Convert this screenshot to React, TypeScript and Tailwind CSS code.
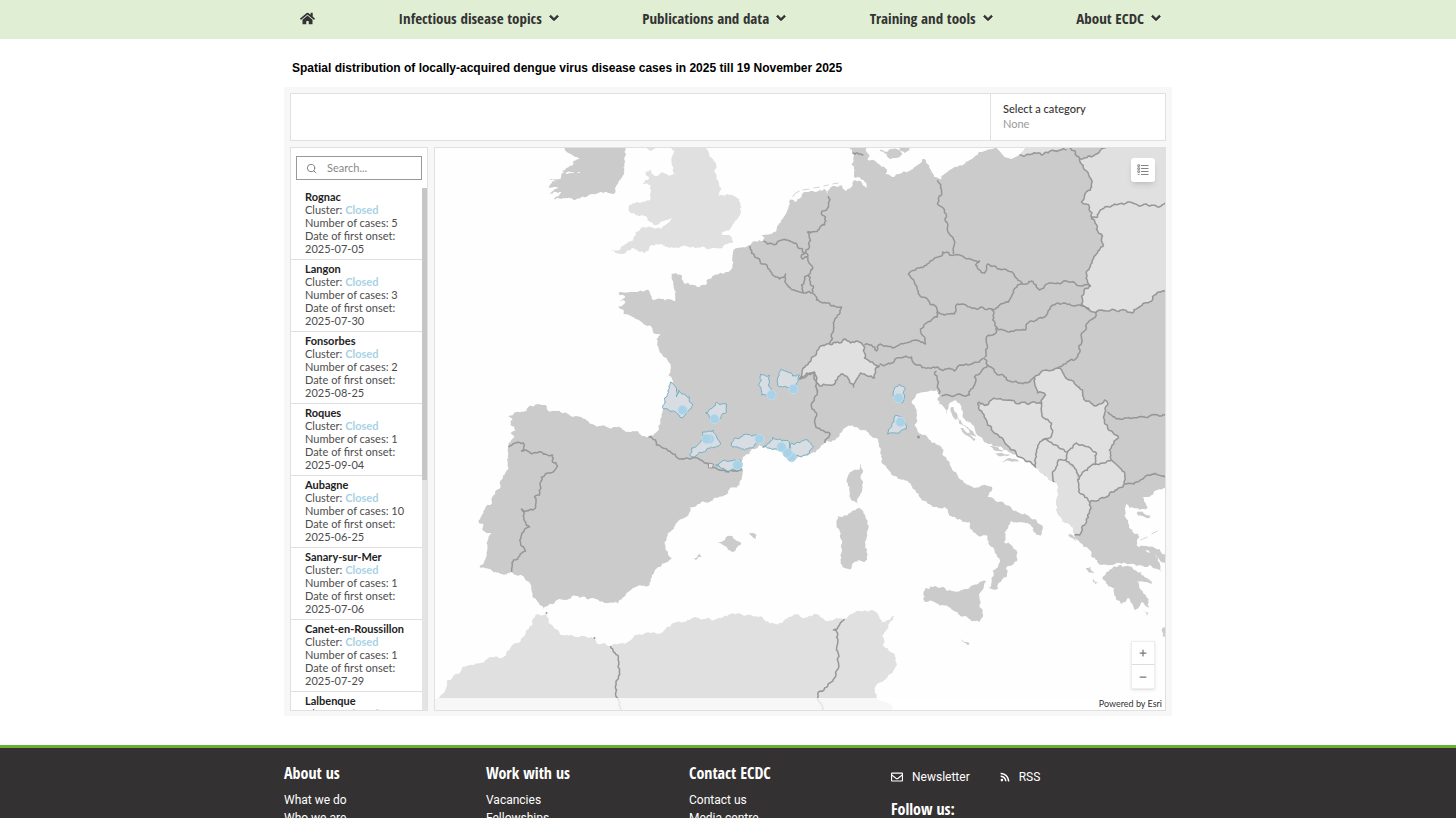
import { FaChevronDown, FaHome, FaRegEnvelope, FaRss } from 'react-icons/fa'
import { Minus, Plus, Search } from 'lucide-react'

const navItems = ['Infectious disease topics', 'Publications and data', 'Training and tools', 'About ECDC']

const clusters = [
  { name: 'Rognac', cases: 5, onset: '2025-07-05' },
  { name: 'Langon', cases: 3, onset: '2025-07-30' },
  { name: 'Fonsorbes', cases: 2, onset: '2025-08-25' },
  { name: 'Roques', cases: 1, onset: '2025-09-04' },
  { name: 'Aubagne', cases: 10, onset: '2025-06-25' },
  { name: 'Sanary-sur-Mer', cases: 1, onset: '2025-07-06' },
  { name: 'Canet-en-Roussillon', cases: 1, onset: '2025-07-29' },
  { name: 'Lalbenque', cases: 1, onset: '2025-08-18' },
]

const footerColumns = [
  { title: 'About us', links: ['What we do', 'Who we are'] },
  { title: 'Work with us', links: ['Vacancies', 'Fellowships'] },
  { title: 'Contact ECDC', links: ['Contact us', 'Media centre'] },
]

// EU/EEA land, mainland first and then the islands
const euLand = [
  '619,294 634,292 649,290 651,295 655,300 662,299 669,299 676,301 675,290 672,274 682,275 684,282 694,285 700,287 706,285 707,280 715,275 728,272 733,267 734,250 738,248 751,245 763,241 768,235 777,229 783,219 788,210 791,199 795,202 802,197 805,192 813,191 825,189 828,194 830,189 833,186 842,185 846,191 848,189 852,187 855,180 861,181 868,188 864,180 856,178 855,170 852,164 854,157 850,148 850,136 867,136 867,148 870,155 868,160 877,162 882,167 887,169 886,174 893,177 898,174 910,171 920,164 923,159 928,164 932,172 935,177 942,179 945,174 957,167 970,160 980,152 997,147 1000,136 1180,136 1180,488 1166,488 1158,490 1153,495 1143,497 1148,508 1140,510 1130,508 1127,504 1125,515 1133,530 1140,537 1137,546 1146,551 1157,557 1163,573 1160,570 1150,565 1137,566 1120,563 1102,565 1092,557 1090,550 1080,542 1075,535 1073,527 1063,522 1058,513 1058,507 1059,487 1055,482 1048,477 1037,468 1020,457 1003,448 987,443 975,428 963,415 962,407 957,401 952,402 949,408 947,414 938,400 940,393 937,390 930,391 920,393 912,402 917,413 915,425 923,435 933,443 942,447 952,468 963,480 973,487 988,486 993,488 988,497 1005,504 1028,515 1042,525 1041,536 1037,535 1034,528 1028,523 1012,521 1005,532 1005,543 1017,550 1018,560 1007,567 1007,577 1002,580 998,589 989,588 993,577 993,570 998,568 1000,563 993,547 987,535 982,536 973,530 970,522 963,522 953,517 945,507 933,507 920,497 905,480 895,476 885,465 882,455 877,438 870,435 857,427 847,427 837,438 825,443 812,453 803,457 793,460 787,452 777,450 767,447 760,445 743,457 742,468 740,485 718,498 690,507 690,512 677,523 665,542 666,550 673,559 661,567 651,579 649,586 636,587 627,593 619,603 607,603 596,599 582,597 572,597 566,600 556,601 549,605 544,609 534,598 532,590 530,582 522,575 512,572 501,574 491,569 480,567 487,553 489,537 492,533 483,530 484,524 479,523 484,513 486,507 491,505 497,490 509,468 509,447 511,442 516,437 511,433 516,430 511,425 513,420 509,416 516,412 527,411 529,407 539,404 546,405 549,411 576,416 601,426 616,427 627,432 634,431 644,436 650,436 656,433 661,423 664,407 671,382 677,386 669,375 671,372 671,364 664,357 659,347 657,339 661,334 656,334 652,327 642,322 634,317 624,314 624,310 619,306 626,302 620,300 626,297',
  '565,136 565,148 571,154 581,159 574,161 574,164 567,168 563,171 571,172 581,173 567,174 562,174 561,179 550,179 557,181 549,187 559,188 550,194 562,192 554,199 562,199 574,200 582,197 594,194 601,192 607,192 614,194 616,190 621,180 624,175 625,160 626,148 626,136',
  '1103,579 1110,570 1120,565 1133,568 1142,572 1150,580 1153,584 1137,581 1147,597 1149,608 1142,602 1135,610 1128,598 1122,604 1117,600 1115,588',
  '1133,545 1147,546 1160,549 1167,556 1167,565 1157,556 1143,551',
  '1137,513 1144,513 1151,516 1150,518 1142,516',
  '924,593 926,588 930,589 931,586 942,587 952,591 970,588 987,581 980,597 983,612 980,622 970,619 958,612 943,605 933,601 924,600',
  '838,516 843,517 860,508 864,513 869,528 867,538 865,562 860,560 855,562 852,568 843,567 841,560 842,540 837,523',
  '861,463 863,473 863,487 858,504 850,497 847,482 850,473 860,470',
  '718,543 726,538 733,536 736,540 741,542 738,547 733,552 725,546',
  '749,534 757,535 758,541 754,538',
  '694,558 700,554 702,557 696,560',
  '880,150 886,152 892,149 900,150 903,154 897,158 889,158 887,154',
  '905,136 910,150 905,153 900,148',
  '1086,568 1091,567 1095,573 1089,572',
  '1093,579 1099,582 1096,584',
  '1068,533 1073,535 1077,541 1072,538',
  '1145,611 1149,613 1147,617',
  '1163,628 1170,627 1170,637 1163,636',
  '962,639 970,643 969,645 964,642',
  '903,466 912,466 911,468 905,469',
  '762,235 771,234 776,237 772,240 765,238',
  // Dalmatian islands
  '951,408 954,407 958,415 956,420 953,416',
  '957,417 961,420 964,426 960,424',
  '961,428 968,433 976,439 974,441 966,435',
  '964,425 971,430 977,437 970,433',
  '990,447 997,447 1004,450 996,451',
  '994,453 1002,453 1011,455 1003,456',
  '1001,460 1010,458 1020,461 1010,461',
]

// countries outside the surveillance area
const otherLand = [
  // Great Britain
  '671,136 671,148 675,152 672,164 676,175 667,174 654,175 651,170 646,172 650,178 643,184 651,185 651,199 640,203 629,206 631,213 642,215 651,222 657,225 667,220 674,216 662,229 644,227 636,232 634,239 621,249 612,250 621,254 634,248 645,253 652,245 662,244 667,247 687,246 700,248 723,248 733,243 732,237 722,234 732,227 738,219 742,207 740,199 730,195 718,196 722,189 717,175 717,164 708,150 702,136',
  '647,148 652,151 657,144 652,143',
  // Maghreb
  '436,699 447,687 448,680 467,666 504,657 517,643 536,615 547,614 549,623 561,635 577,637 594,638 597,643 611,646 627,643 634,637 651,633 661,633 674,623 693,618 717,619 725,616 747,615 763,617 775,624 785,620 797,614 805,618 815,614 827,621 837,618 845,619 860,611 872,610 878,613 882,623 895,616 883,635 885,647 895,654 897,663 888,677 875,688 877,697 890,704 897,720 430,720 430,702',
  // Belarus and Ukraine
  '1080,159 1084,168 1090,177 1091,190 1085,196 1082,202 1090,207 1092,219 1097,229 1103,236 1104,245 1100,250 1087,274 1088,282 1091,286 1085,289 1082,304 1090,310 1098,311 1110,311 1122,310 1133,313 1138,308 1150,302 1155,295 1161,292 1172,289 1180,288 1180,136 1108,136 1108,144 1102,149 1097,154 1092,157',
  // Kaliningrad
  '1020,155 1043,155 1067,150 1066,136 1026,136 1026,150',
  // Switzerland
  '830,344 820,347 817,353 810,362 803,370 803,378 810,373 815,372 817,380 820,386 828,385 835,384 843,374 848,377 854,387 858,378 861,373 868,376 875,378 876,371 880,366 873,362 865,358 865,347 862,343 848,341 840,343',
  // Bosnia and Herzegovina
  '979,402 988,405 992,400 1010,400 1033,402 1042,404 1043,417 1052,423 1052,435 1043,440 1037,450 1036,467 1020,457 1000,437 988,425 980,410',
  // Serbia and Kosovo
  '1035,377 1047,370 1058,368 1070,380 1083,390 1085,400 1098,405 1105,400 1108,405 1105,413 1108,427 1119,437 1112,447 1112,460 1090,467 1080,477 1077,470 1066,460 1068,452 1048,440 1052,435 1052,423 1043,417 1042,404 1046,395 1038,393',
  // Montenegro
  '1036,467 1037,450 1043,440 1048,440 1068,452 1066,462 1059,460 1053,472 1055,482 1048,477',
  // North Macedonia
  '1080,477 1090,467 1112,460 1125,472 1125,484 1107,497 1090,502 1080,493 1078,480',
  // Albania
  '1055,482 1053,472 1059,460 1067,460 1077,470 1078,480 1080,493 1090,502 1087,522 1080,535 1075,535 1073,527 1063,522 1058,513 1058,507 1059,487',
]

const borders = [
  '509,447 516,443 524,443 522,451 534,453 542,452 553,455 553,462 558,466 551,473 542,477 540,495 535,497 536,505 533,510 522,509 526,522 530,527 522,535 521,542 526,551 514,560 512,572',
  '649,437 656,440 657,445 668,450 677,457 693,458 707,463 720,470 729,472 742,470',
  '751,246 752,253 760,259 762,264 768,267 777,277 780,279 786,274 787,284 797,291 807,293 813,293 817,300 830,303 842,307 835,320 830,344',
  '764,241 768,244 777,244 782,240 793,242 803,249 805,254',
  '829,196 827,210 822,212 826,217 825,225 820,229 808,232 811,240 809,249 806,252 802,255 803,259 808,257 813,269 809,275 805,277 802,285 803,293',
  '806,252 808,257',
  '809,275 810,280 814,286 813,293',
  '830,344 820,347 817,353 810,362 803,370 803,378 810,373 815,372 817,380 820,386 828,385 835,384 843,374 848,377 854,387 858,378 861,373 868,376 875,378 876,371 880,366 873,362 865,358 865,347 862,343 848,341 846,339 840,343 830,344',
  '803,378 800,379 807,373 815,373 817,388 818,393 812,407 817,413 815,422 818,428 830,433 828,438 825,443',
  '865,345 872,345 877,351 881,344 893,348 910,342 920,341 926,344 925,337 921,329 932,320 938,317 938,311 930,302 920,295 915,282 909,274 920,268 930,262 942,256 943,252 950,255 955,255',
  '938,180 942,195 938,204 945,210 948,227 955,244 954,254',
  '955,255 960,255 973,260 980,261 976,265 985,273 988,264 1000,269 1015,275 1023,284 1032,281 1040,290 1047,284 1058,283 1067,281 1085,285 1091,286',
  '1023,284 1018,285 1010,300 1001,304 992,309',
  '938,312 945,315 955,314 958,304 975,308 992,309 993,320 997,327 995,334 987,337 988,347 985,357',
  '997,327 1010,332 1026,330 1027,324 1047,315 1055,305 1070,304 1082,306 1090,310',
  '1098,311 1087,324 1082,337 1075,360 1058,368',
  '1035,377 1030,382 1012,382 1000,375 988,365 984,358',
  '880,364 892,363 897,358 912,357 917,365 940,369 955,371 962,365 980,362 984,358',
  '937,371 935,374 938,385 939,394',
  '988,365 975,377 975,385 970,395 960,394 942,396',
  '979,402 988,405 992,400 1010,400 1033,402 1042,404 1043,417 1052,423 1052,435 1043,440 1037,450 1036,467 1020,457 1000,437 988,425 980,410 979,402',
  '1042,404 1046,395 1038,393 1035,377 1047,370 1058,368 1070,380 1083,390 1085,400 1098,405 1105,400 1108,405 1105,413 1108,427 1119,437 1112,447 1112,460',
  '1043,440 1048,440 1068,452 1077,443 1085,446 1097,453 1095,465',
  '1068,452 1066,460 1077,470 1080,477',
  '1080,477 1090,467 1112,460 1125,472 1125,484 1107,497 1090,502 1080,493 1078,480 1080,477',
  '1055,482 1053,472 1059,460 1067,460',
  '1090,502 1087,522 1080,535 1075,535',
  '1108,412 1117,419 1133,418 1150,416 1172,415',
  '1125,484 1137,482 1153,474 1172,477',
  '1066,146 1076,152 1080,159 1084,168 1090,177 1091,190 1085,196 1082,202 1090,207 1092,219 1097,229 1103,236 1104,245 1100,250 1087,274 1088,282 1091,286 1085,289 1082,304 1090,310 1098,311 1110,311 1122,310 1133,313 1138,308 1150,302 1155,295 1161,292 1172,289',
  '1092,218 1098,217 1103,209 1115,204 1127,203 1147,204 1150,206 1158,207 1172,201',
  '1020,155 1043,155 1067,150',
  '1080,159 1092,157 1097,154 1102,149 1108,144',
  '853,153 858,153 864,155',
  '611,646 619,657 619,677 617,690 618,698 622,712',
  '845,619 840,625 834,630 838,633 837,650 839,663 835,678 825,688 819,692 818,698 823,712',
]

const affectedAreas = [
  '671,382 677,390 677,397 679,390 684,394 690,397 690,402 693,404 687,412 683,418 676,412 664,409 665,398',
  '717,402 722,404 727,404 727,412 720,419 711,420 706,413 713,408',
  '761,374 766,376 770,375 769,385 772,393 772,400 768,397 762,395 759,385 762,380',
  '782,369 788,372 793,376 800,375 797,383 792,387 783,387 778,385 778,378',
  '703,432 714,430 718,439 721,443 712,447 700,452 694,457 690,455 692,448 700,443 704,438',
  '732,443 735,438 747,434 758,435 763,440 755,445 745,450 733,447',
  '763,447 770,443 773,437 780,439 790,443 792,450 787,452 768,448',
  '792,443 805,440 810,442 814,447 810,453 802,457 795,457 791,452',
  '716,465 725,460 740,460 742,470 728,471',
  '900,384 906,388 905,395 902,403 897,398 894,392',
  '895,416 902,417 906,423 907,429 895,433 888,434 892,427',
]

const markers = [
  [683, 410], [715, 419], [772, 395], [794, 389], [710, 439], [707, 439], [760, 439],
  [792, 457], [788, 453], [782, 447], [738, 465], [899, 398], [901, 422],
]

type Point = [number, number]

// Splits a segment at a shifted midpoint. The shift depends only on the two
// ends, so neighbours that share a border get the same line.
function splitSegment(a: Point, b: Point): Point[] {
  const length = Math.hypot(b[0] - a[0], b[1] - a[1])
  if (length < 2.6) return [a]
  const forward = a[0] < b[0] || (a[0] === b[0] && a[1] < b[1])
  const [p, q] = forward ? [a, b] : [b, a]
  const seed = Math.sin(p[0] * 12.9898 + p[1] * 78.233 + q[0] * 37.719 + q[1] * 4.581) * 43758.5453
  const shift = (seed - Math.floor(seed) - 0.5) * Math.min(length * 0.5, 3.2)
  const mid: Point = [
    (p[0] + q[0]) / 2 - ((q[1] - p[1]) / length) * shift,
    (p[1] + q[1]) / 2 + ((q[0] - p[0]) / length) * shift,
  ]
  return [...splitSegment(a, mid), ...splitSegment(mid, b)]
}

function toPath(points: string, closed: boolean) {
  const list = points.split(' ').map((pair) => pair.split(',').map(Number) as Point)
  if (closed) list.push(list[0])
  const line = list.slice(1).flatMap((point, i) => splitSegment(list[i], point))
  line.push(list[list.length - 1])
  return `M${line.map(([x, y]) => `${x.toFixed(1)} ${y.toFixed(1)}`).join('L')}${closed ? 'Z' : ''}`
}

function NavBar() {
  return (
    <header className="bg-[#e0eed3]">
      <nav className="mx-auto flex h-[39px] max-w-[888px] items-center justify-between pb-[3px] pl-4 pr-[11px] text-[#333]">
        <a href="#home" aria-label="Home">
          <FaHome className="size-[15px]" />
        </a>
        {navItems.map((item) => (
          <button
            key={item}
            className="flex items-center gap-[7px] font-['Open_Sans_Condensed','Noto_Sans_Condensed','Liberation_Sans_Narrow','Noto_Sans',sans-serif] text-[15px] font-bold leading-[19px]"
          >
            {item}
            <FaChevronDown className="size-[10px]" stroke="currentColor" strokeWidth={50} />
          </button>
        ))}
      </nav>
    </header>
  )
}

function ClusterList() {
  return (
    <aside className="flex w-[138px] shrink-0 flex-col border border-[#e0e0e0] bg-white">
      <label className="mx-[5px] mb-2 mt-2 flex h-6 items-center gap-[10px] border border-[#999] px-[9px]">
        <Search className="size-[11px] shrink-0 text-[#777]" strokeWidth={2} />
        <input
          type="text"
          aria-label="Search clusters"
          placeholder="Search..."
          className="w-full min-w-0 text-[11px] outline-none placeholder:text-[#888]"
        />
      </label>
      <div className="flex min-h-0 flex-1">
        <ul className="min-w-0 flex-1 overflow-hidden text-[11px] leading-[13px] text-[#4c4c4c]">
          {clusters.map((cluster) => (
            <li key={cluster.name} className="h-[72px] whitespace-nowrap border-b border-[#dfdfdf] pl-[14px] pt-[2px]">
              <p className="font-bold text-[#222]">{cluster.name}</p>
              <p>
                Cluster: <span className="font-bold text-[#a9d2e6]">Closed</span>
              </p>
              <p>Number of cases: {cluster.cases}</p>
              <p>Date of first onset:</p>
              <p>{cluster.onset}</p>
            </li>
          ))}
        </ul>
        <div className="w-[5px] bg-[#e4e4e4]">
          <div className="h-[56%] bg-[#c6c6c6]" />
        </div>
      </div>
    </aside>
  )
}

function ClusterMap() {
  return (
    <section className="relative min-w-0 flex-1 overflow-hidden border border-[#e0e0e0] bg-[#fefefe]">
      <svg
        viewBox="435 148 731 562"
        preserveAspectRatio="xMidYMid slice"
        className="block size-full"
        role="img"
        aria-label="Map of dengue clusters in Europe"
      >
        <g fill="#cbcbcb">
          {euLand.map((points) => (
            <path key={points} d={toPath(points, true)} />
          ))}
        </g>
        <g fill="#e0e0e0">
          {otherLand.map((points) => (
            <path key={points} d={toPath(points, true)} />
          ))}
        </g>
        {/* Gulf of Gdansk */}
        <path d="M997 136V148L1000 151 1005 157 1012 159 1020 155 1026 148V136Z" fill="#fefefe" />
        <g fill="none" stroke="#969696" strokeWidth={1.5} strokeLinejoin="round">
          {borders.map((points) => (
            <path key={points} d={toPath(points, false)} />
          ))}
        </g>
        {/* Andorra */}
        <path d="M709 463L714 464 713 468 709 468Z" fill="#e0e0e0" stroke="#969696" />
        {/* Frisian and Sporades islands */}
        <g fill="none" stroke="#d4d4d4" strokeWidth={1}>
          <path d="M793 197L796 193 800 191M803 190L810 189M814 188L820 187M824 186L829 185M833 184L839 183" />
          <path d="M1141 540L1148 537M1152 534L1158 531" />
        </g>
        <g fill="#d8dde3" stroke="#74afc2" strokeWidth={1} strokeLinejoin="round">
          {affectedAreas.map((points) => (
            <path key={points} d={toPath(points, true)} />
          ))}
        </g>
        <g fill="#999">
          <circle cx={919} cy={437} r={1.6} />
          <circle cx={547} cy={613} r={1} />
          <circle cx={595} cy={638} r={1} />
        </g>
        <g fill="#a9d2e7" stroke="#bfdded" strokeWidth={1}>
          {markers.map(([x, y]) => (
            <circle key={`${x}-${y}`} cx={x} cy={y} r={4.7} />
          ))}
        </g>
      </svg>
      <button
        aria-label="Legend"
        className="absolute right-[10px] top-[10px] flex size-6 items-center justify-center rounded-[3px] bg-white shadow-md"
      >
        <svg viewBox="0 0 12 12" className="size-3" fill="none" stroke="#666">
          <path d="M4 1.5H11.5M4 4.5H11.5M4 7.5H11.5M4 10.5H11.5" strokeWidth="0.8" />
          <path d="M0.8 0.8H2.6V2.4H0.8ZM0.8 3.8H2.6V5.4H0.8ZM0.8 6.8H2.6V8.4H0.8ZM0.8 10.5H2.6" strokeWidth="0.7" />
        </svg>
      </button>
      <div className="absolute bottom-[21px] right-[10px] flex flex-col bg-white text-[#777] shadow-sm">
        <button
          aria-label="Zoom in"
          className="flex size-6 items-center justify-center border border-[#eee] border-b-[#ddd]"
        >
          <Plus className="size-[10px]" strokeWidth={3} />
        </button>
        <button aria-label="Zoom out" className="flex size-6 items-center justify-center border border-t-0 border-[#eee]">
          <Minus className="size-[10px]" strokeWidth={3} />
        </button>
      </div>
      <p className="absolute inset-x-0 bottom-0 h-3 bg-white/75 pr-[3px] text-right text-[9px] leading-[11px] text-[#333]">
        Powered by Esri
      </p>
    </section>
  )
}

function Dashboard() {
  return (
    <div className="flex flex-col gap-[6px] bg-[#f7f7f7] px-[6px] pb-[5px] pt-[6px] font-[Lato,sans-serif]">
      <div className="flex h-12 border border-[#e0e0e0] bg-white">
        <div className="flex-1" />
        <div className="flex w-[175px] flex-col justify-center border-l border-[#e0e0e0] pb-[2px] pl-3 text-[11px] leading-[15px]">
          <label htmlFor="category" className="font-medium text-[#333]">
            Select a category
          </label>
          <select id="category" className="w-full appearance-none text-[#999]">
            <option>None</option>
          </select>
        </div>
      </div>
      <div className="flex h-[564px] gap-[6px]">
        <ClusterList />
        <ClusterMap />
      </div>
    </div>
  )
}

function Footer() {
  return (
    <footer className="flex-1 border-t-[3px] border-[#69b12f] bg-[#333131] font-[Roboto,sans-serif] text-[12px] text-white">
      <div className="mx-auto grid max-w-[888px] grid-cols-[202px_203px_202px_1fr] pt-[15px]">
        {footerColumns.map((column) => (
          <div key={column.title}>
            <h2 className="font-['Open_Sans_Condensed','Noto_Sans_Condensed','Liberation_Sans_Narrow','Noto_Sans',sans-serif] text-[16px] font-bold leading-5">
              {column.title}
            </h2>
            <ul className="mt-2 leading-[18px]">
              {column.links.map((link) => (
                <li key={link}>
                  <a href="#footer">{link}</a>
                </li>
              ))}
            </ul>
          </div>
        ))}
        <div>
          <div className="flex gap-[30px] pt-1 leading-5">
            <a href="#newsletter" className="flex items-center gap-[9px]">
              <FaRegEnvelope className="size-3" />
              Newsletter
            </a>
            <a href="#rss" className="flex items-center gap-[9px]">
              <FaRss className="size-[10px]" />
              RSS
            </a>
          </div>
          <h2 className="mt-3 font-['Open_Sans_Condensed','Noto_Sans_Condensed','Liberation_Sans_Narrow','Noto_Sans',sans-serif] text-[16px] font-bold leading-5">
            Follow us:
          </h2>
        </div>
      </div>
    </footer>
  )
}

export default function App() {
  return (
    <div className="flex h-screen flex-col overflow-hidden bg-white">
      <NavBar />
      <main className="mx-auto w-full max-w-[888px] shrink-0 pb-[29px]">
        <h1 className="px-2 pb-[14px] pt-6 font-['Liberation_Sans',Arial,sans-serif] text-[12px] font-bold leading-[10px] text-black">
          Spatial distribution of locally-acquired dengue virus disease cases in 2025 till 19 November 2025
        </h1>
        <Dashboard />
      </main>
      <Footer />
    </div>
  )
}
